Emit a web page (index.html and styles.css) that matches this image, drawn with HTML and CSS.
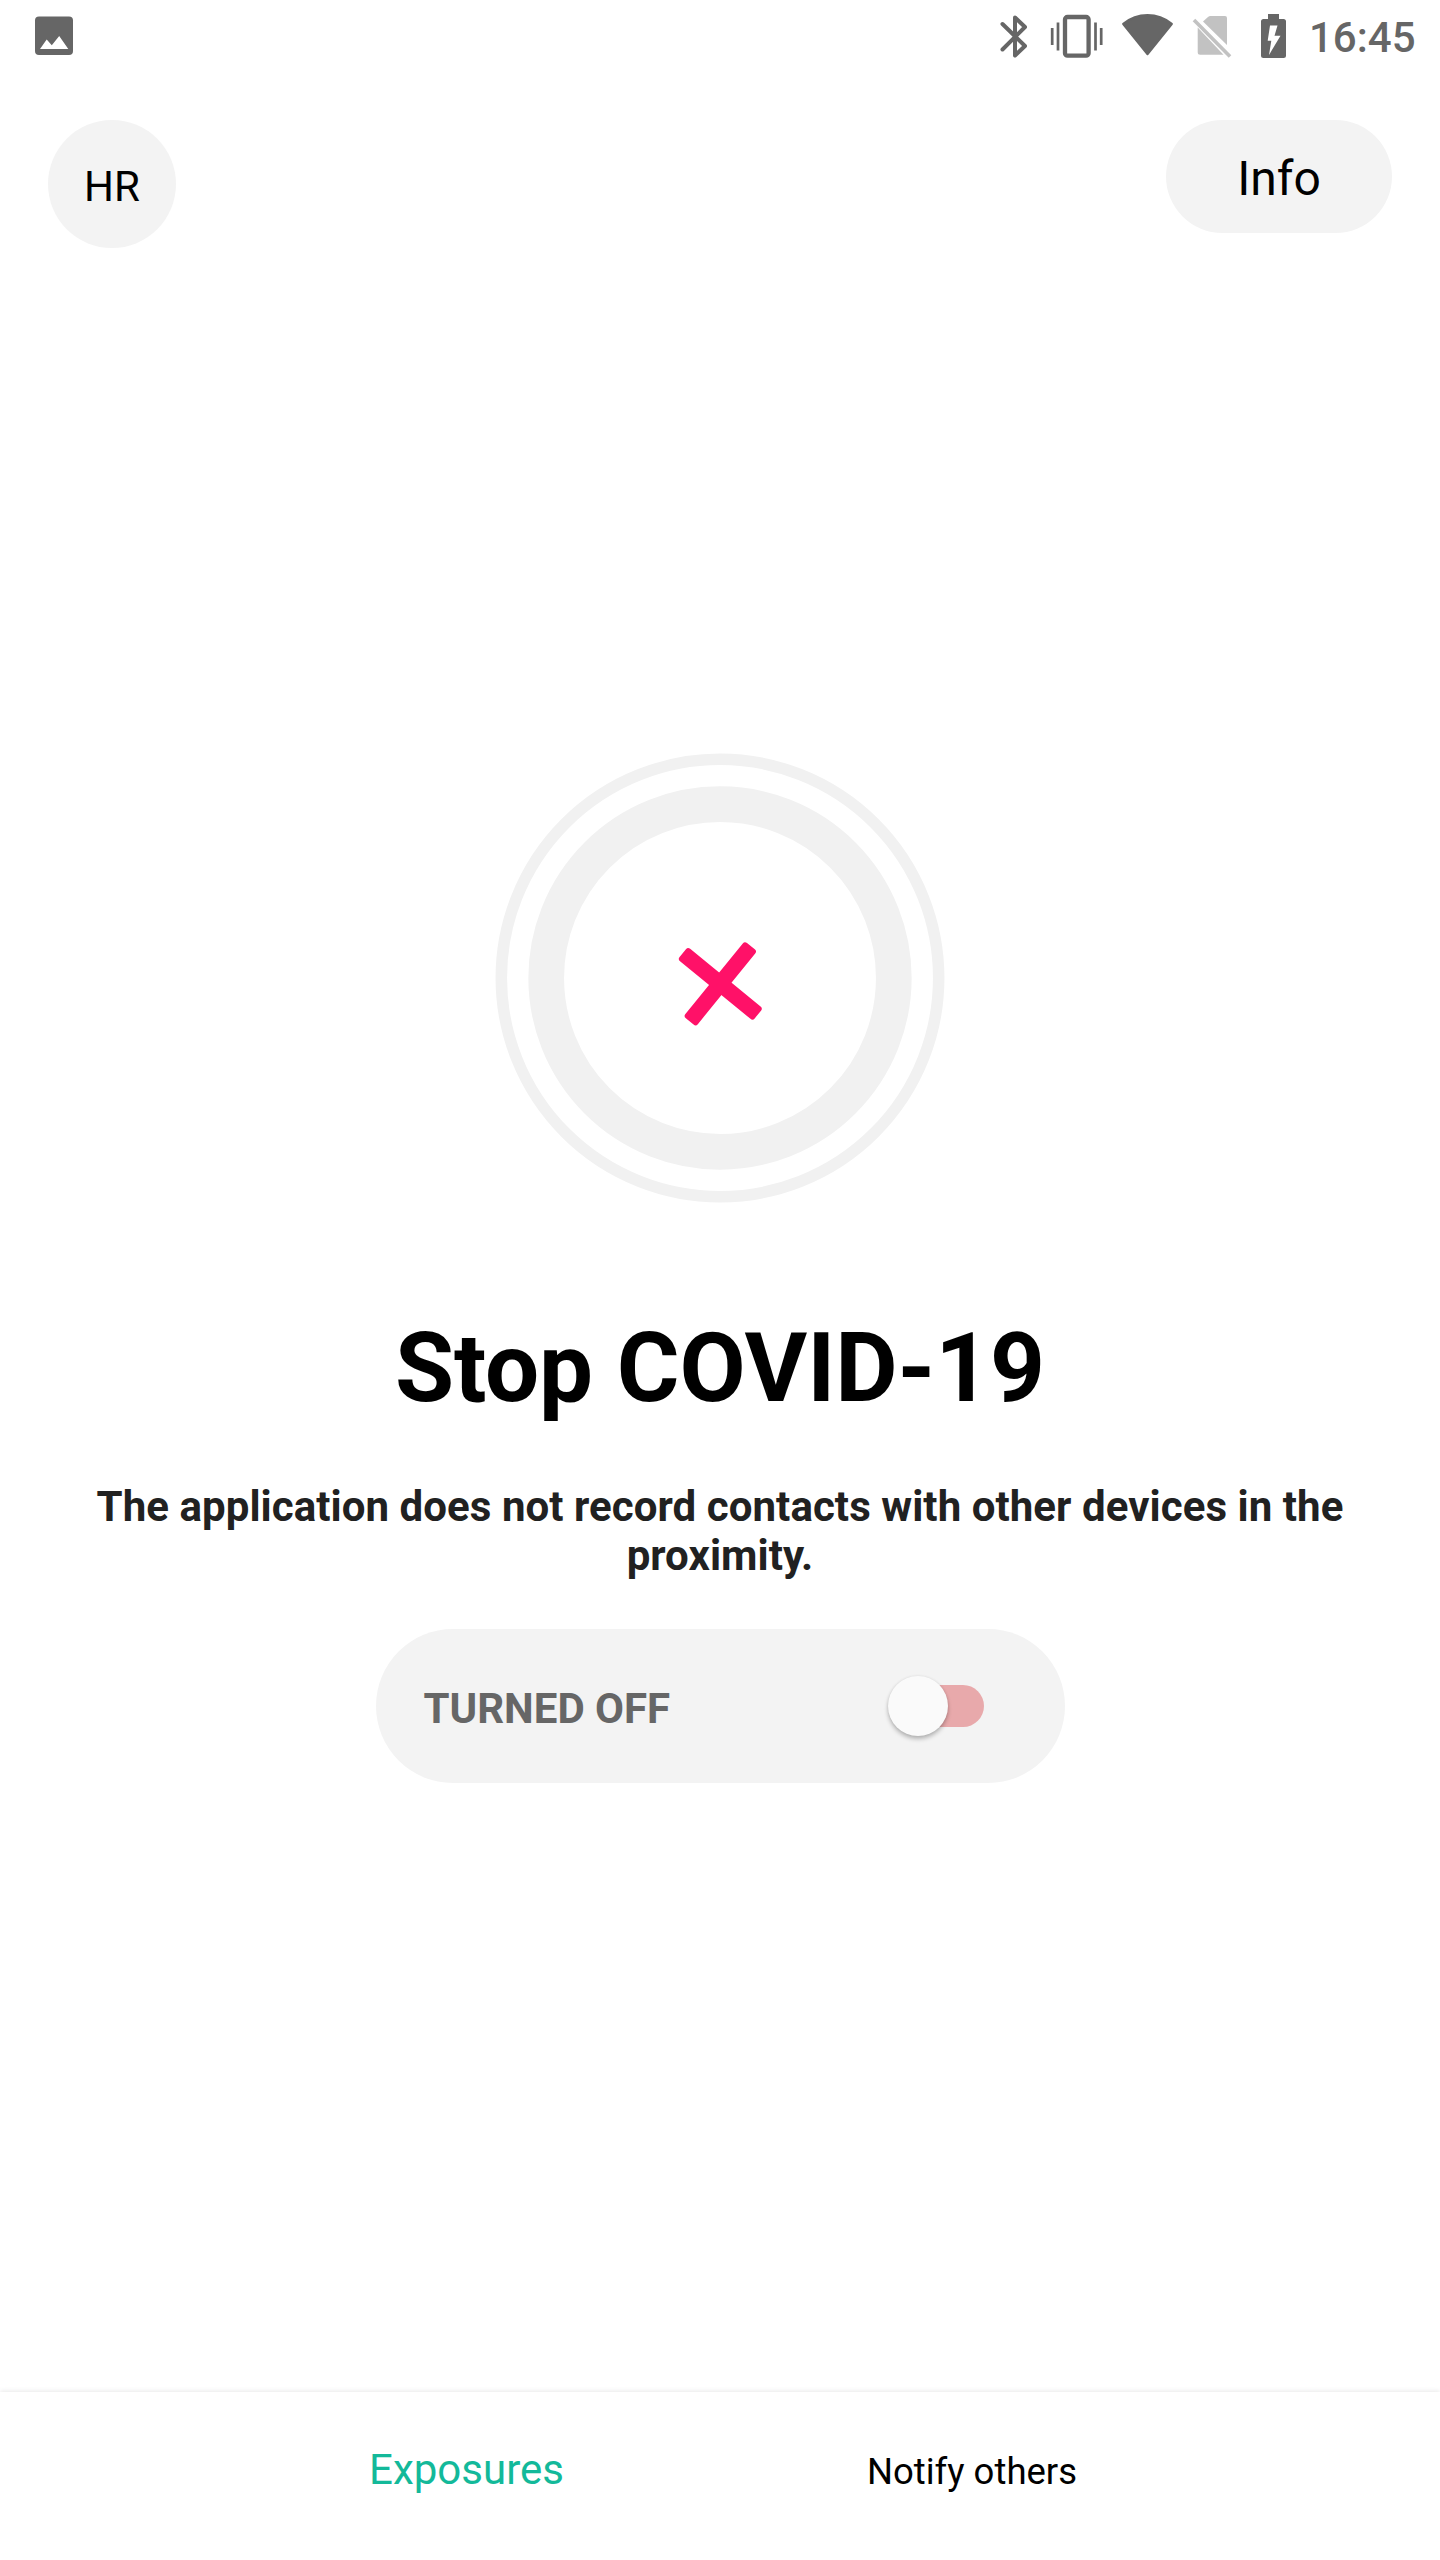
FILE: index.html
```html
<!DOCTYPE html>
<html lang="en">
<head>
<meta charset="utf-8">
<title>Stop COVID-19</title>
<link rel="stylesheet" href="styles.css">
</head>
<body>
<div class="screen">
  <div class="status">
    <svg class="photo" width="40" height="72" viewBox="0 0 40 72"><rect x="1" y="16.5" width="38" height="38.5" rx="4" fill="#666"/><path d="M6 49 12.700 39.500 17.800 45.300 25.200 36 34.300 49Z" fill="#fff"/></svg>
    <div class="system">
      <svg width="28" height="72" viewBox="0 0 28 72"><path d="M2.500 24 25 46 15 55.500V17.500L25 27 2.500 49.500" fill="none" stroke="#666" stroke-width="4" stroke-linecap="round" stroke-linejoin="round"/></svg>
      <svg width="54" height="72" viewBox="0 0 54 72" fill="none" stroke="#666"><rect x="15" y="17" width="23.600" height="38.700" rx="2.500" stroke-width="4.300"/><path d="M8 22.500v28M2.200 28v17M45.500 22.500v28M51.200 28v17" stroke-width="2.700"/></svg>
      <svg width="54" height="72" viewBox="0 0 54 72"><path d="M2.300 24Q13 15.300 26.500 15.300T50.700 24L26.500 54Z" fill="#666" stroke="#666" stroke-width="2.400" stroke-linejoin="round"/></svg>
      <svg width="40" height="72" viewBox="0 0 40 72"><path d="M11 21.500 16 17q1-1 2.500-1H33q2 0 2 2V45ZM5.700 27.500 31.500 54.800H8.200q-2.500 0-2.500-2.500Z" fill="#c2c2c2"/><path d="M2 20 38 56.500" stroke="#c2c2c2" stroke-width="3.600"/></svg>
      <svg width="26" height="72" viewBox="0 0 26 72"><path d="M8 14H19V19H23.500Q26 19 26 21.500V55.500Q26 58 23.500 58H3.500Q1 58 1 55.500V21.500Q1 19 3.500 19H8Z" fill="#666"/><path d="M10 25.500H17.500L14.500 35.800H20.500L9 55 11.300 40.700H7.700Z" fill="#fff"/></svg>
      <span class="clock">16:45</span>
    </div>
  </div>
  <header class="header">
    <button class="lang">HR</button>
    <button class="info">Info</button>
  </header>
  <main class="main">
    <svg class="emblem" width="452" height="452" viewBox="-226 -226 452 452">
      <g fill="none" stroke="#f1f1f1"><circle r="218.700" stroke-width="11.500"/><circle r="173.800" stroke-width="35.700"/></g>
      <g transform="translate(.3 5.800)" fill="#ff1168"><rect x="-48.500" y="-8" width="97" height="16" rx="3" transform="rotate(39.300)"/><rect x="-48.500" y="-8" width="97" height="16" rx="3" transform="rotate(-50.900)"/></g>
    </svg>
    <h1 class="title">Stop COVID-19</h1>
    <p class="message">The application does not record contacts with other devices in the proximity.</p>
    <div class="toggle">
      <span class="state">TURNED OFF</span>
      <span class="switch"><span class="thumb"></span></span>
    </div>
  </main>
  <nav class="nav">
    <a class="tab active">Exposures</a>
    <a class="tab">Notify others</a>
  </nav>
</div>
</body>
</html>
```
FILE: styles.css
```css
* { box-sizing: border-box; }
body { margin: 0; background: #fff; font-family: Roboto, "Noto Sans", sans-serif; color: #000; }
.screen { width: 1440px; height: 2560px; display: flex; flex-direction: column; overflow: hidden; }
svg { display: block; flex: none; }

.status { height: 72px; display: flex; justify-content: space-between; padding: 0 24px 0 34px; }
.system { display: flex; }
.system svg:nth-child(1) { margin-right: 22px; }
.system svg:nth-child(2) { margin-right: 17px; }
.system svg:nth-child(3) { margin-right: 17px; }
.system svg:nth-child(4) { margin-right: 28px; }
.system svg:nth-child(5) { margin-right: 23px; }
.clock { width: 107px; line-height: 49px; padding-top: 13px; font-size: 42px; font-weight: 500; color: #666; white-space: nowrap; }

.header { display: flex; justify-content: space-between; align-items: flex-start; padding: 48px 48px 0; height: 176px; }
button { border: 0; background: #f3f3f3; font-family: inherit; color: #000; }
.lang { width: 128px; height: 128px; border-radius: 50%; padding: 5px 0 0; font-size: 42px; line-height: 49px; }
.info { width: 226px; height: 113px; border-radius: 57px; padding: 4px 0 0; font-size: 48px; line-height: 56px; }

.main { flex: 1; display: flex; flex-direction: column; align-items: center; padding-top: 504px; }
.title { margin: 108px 0 0; font-size: 96px; line-height: 112px; font-weight: 700; letter-spacing: -.1px; }
.message { width: 1300px; margin: 58px 0 0; font-size: 42px; line-height: 49px; font-weight: 700; letter-spacing: .06px; text-align: center; color: #212121; }
.toggle { width: 689px; height: 154px; margin-top: 49px; border-radius: 77px; background: #f3f3f3; display: flex; align-items: center; justify-content: space-between; padding: 0 81px 0 48px; }
.state { padding-top: 4px; font-size: 42px; line-height: 49px; font-weight: 700; color: #666; }
.switch { width: 87px; height: 42px; border-radius: 21px; background: #e8a9ab; display: flex; align-items: center; }
.thumb { flex: none; width: 60px; height: 60px; margin-left: -9px; border-radius: 50%; background: #fafafa; box-shadow: 0 3px 4px rgba(0,0,0,.25), 0 0 3px rgba(0,0,0,.08); }

.nav { height: 168px; display: flex; justify-content: center; align-items: baseline; padding-top: 53px; box-shadow: 0 -1px 5px rgba(0,0,0,.09); }
.tab { font-size: 36.5px; line-height: 49px; width: 504px; text-align: center; }
.tab.active { font-size: 42px; color: #13b99a; padding-right: 3px; }
```
